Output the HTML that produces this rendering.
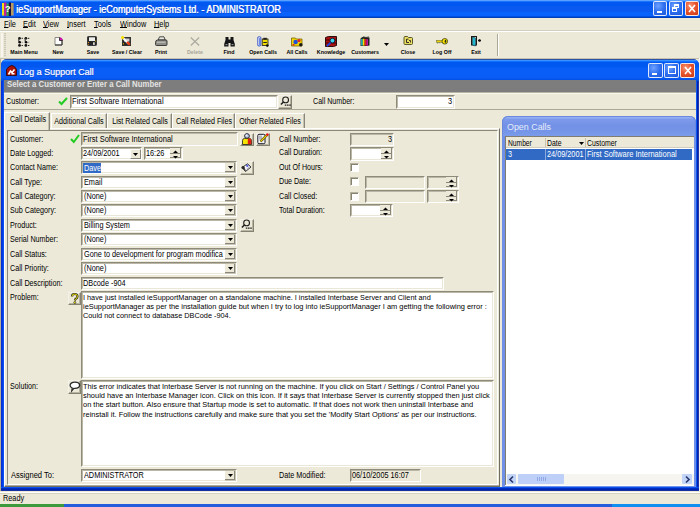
<!DOCTYPE html>
<html><head><meta charset="utf-8"><style>
html,body{margin:0;padding:0;}
body{width:700px;height:507px;overflow:hidden;position:relative;background:#ECE9D8;font-family:"Liberation Sans",sans-serif;}
.a{position:absolute;}
.t{position:absolute;white-space:nowrap;line-height:1;font-family:"Liberation Sans",sans-serif;}
svg.a{overflow:visible}
u{text-decoration-thickness:1px;text-underline-offset:0px}
</style></head><body>
<div class="a" style="left:0px;top:0px;width:700px;height:18px;background:linear-gradient(to bottom,#5AA0FF 0,#5AA0FF 1px,#1A74FF 1px,#1A74FF 2px,#0058F0 2px,#0058F0 6px,#0A5AF2 6px,#0A5AF2 12px,#0A62FC 12px,#0A62FC 16px,#0050E0 16px,#0050E0 17px,#0040C0 17px)"></div>
<svg class="a" style="left:2px;top:2px" width="12" height="14" viewBox="0 0 12 14"><rect x="0" y="1" width="2.2" height="12.5" fill="#f0e010"/><rect x="2.2" y="0.5" width="2.3" height="13.5" fill="#d01890"/><rect x="4.5" y="1.5" width="2.3" height="12.5" fill="#40a040"/><rect x="6.8" y="0.5" width="2.2" height="13.5" fill="#101040"/><rect x="9" y="1" width="2.6" height="12.5" fill="#b89a60"/><text x="3" y="9.5" font-size="9" font-weight="bold" fill="#fff" font-family="Liberation Sans">?</text></svg>
<div class="t" style="left:16px;top:4.54px;font-size:10px;color:#fff;transform:scaleX(0.9100);transform-origin:0 0;text-shadow:0.6px 0 0 rgba(255,255,255,.9),1px 1px 0 rgba(10,30,140,.4)">ieSupportManager - ieComputerSystems Ltd. - ADMINISTRATOR</div>
<div class="a" style="left:653px;top:1px;width:14px;height:15px;background:radial-gradient(circle at 35% 30%,#6FA2FF 0,#2F6FF0 50%,#1D55D8 100%);border:1px solid rgba(255,255,255,.85);border-radius:2px;box-sizing:border-box"></div>
<div class="a" style="left:657px;top:11px;width:5px;height:2px;background:#fff"></div>
<div class="a" style="left:669px;top:1px;width:14px;height:15px;background:radial-gradient(circle at 35% 30%,#6FA2FF 0,#2F6FF0 50%,#1D55D8 100%);border:1px solid rgba(255,255,255,.85);border-radius:2px;box-sizing:border-box"></div>
<div class="a" style="left:674px;top:4px;width:5px;height:4px;border:1px solid #fff;border-top-width:2px;box-sizing:border-box"></div>
<div class="a" style="left:672px;top:7px;width:5px;height:5px;border:1px solid #fff;border-top-width:2px;box-sizing:border-box;background:#3C74F0"></div>
<div class="a" style="left:685px;top:1px;width:14px;height:15px;background:radial-gradient(circle at 35% 30%,#F79A7A 0,#E8552F 45%,#C93A16 100%);border:1px solid rgba(255,255,255,.85);border-radius:2px;box-sizing:border-box"></div>
<svg class="a" style="left:688px;top:4px" width="8" height="9" viewBox="0 0 8 9"><path d="M1 1L7 8M7 1L1 8" stroke="#fff" stroke-width="1.6"/></svg>
<div class="a" style="left:0px;top:18px;width:700px;height:12px;background:#ECE9D8"></div>
<div class="t" style="left:4px;top:19.80px;font-size:8.5px;color:#000;transform:scaleX(0.8706);transform-origin:0 0;"><u>F</u>ile</div>
<div class="t" style="left:22.6px;top:19.80px;font-size:8.5px;color:#000;transform:scaleX(0.8706);transform-origin:0 0;"><u>E</u>dit</div>
<div class="t" style="left:43px;top:19.80px;font-size:8.5px;color:#000;transform:scaleX(0.8706);transform-origin:0 0;"><u>V</u>iew</div>
<div class="t" style="left:67px;top:19.80px;font-size:8.5px;color:#000;transform:scaleX(0.8706);transform-origin:0 0;"><u>I</u>nsert</div>
<div class="t" style="left:94px;top:19.80px;font-size:8.5px;color:#000;transform:scaleX(0.8706);transform-origin:0 0;"><u>T</u>ools</div>
<div class="t" style="left:119.5px;top:19.80px;font-size:8.5px;color:#000;transform:scaleX(0.8706);transform-origin:0 0;"><u>W</u>indow</div>
<div class="t" style="left:153.7px;top:19.80px;font-size:8.5px;color:#000;transform:scaleX(0.8706);transform-origin:0 0;"><u>H</u>elp</div>
<div class="a" style="left:0px;top:30px;width:700px;height:1px;background:#D3CFBF"></div>
<div class="a" style="left:0px;top:31px;width:700px;height:1px;background:#fff"></div>
<div class="a" style="left:0px;top:32px;width:700px;height:26px;background:#ECE9D8"></div>
<div class="a" style="left:1px;top:33px;width:2px;height:24px;background:#F7F5EE"></div>
<div class="a" style="left:4px;top:33px;width:2px;height:24px;background:repeating-linear-gradient(to bottom,#CDC9B6 0 1px,#E2DFD0 1px 2px)"></div>
<div class="a" style="left:497px;top:34px;width:1px;height:22px;background:#ACA899"></div>
<div class="a" style="left:498px;top:34px;width:1px;height:22px;background:#fff"></div>
<div class="t" style="left:-176px;width:400px;text-align:center;top:50.09px;font-size:5.8px;color:#000;font-weight:bold;transform:scaleX(0.9138);transform-origin:200px 0;">Main Menu</div>
<div class="t" style="left:-142px;width:400px;text-align:center;top:50.09px;font-size:5.8px;color:#000;font-weight:bold;transform:scaleX(0.9138);transform-origin:200px 0;">New</div>
<div class="t" style="left:-107px;width:400px;text-align:center;top:50.09px;font-size:5.8px;color:#000;font-weight:bold;transform:scaleX(0.9138);transform-origin:200px 0;">Save</div>
<div class="t" style="left:-73px;width:400px;text-align:center;top:50.09px;font-size:5.8px;color:#000;font-weight:bold;transform:scaleX(0.9138);transform-origin:200px 0;">Save / Clear</div>
<div class="t" style="left:-39px;width:400px;text-align:center;top:50.09px;font-size:5.8px;color:#000;font-weight:bold;transform:scaleX(0.9138);transform-origin:200px 0;">Print</div>
<div class="t" style="left:-5px;width:400px;text-align:center;top:50.09px;font-size:5.8px;color:#A8A59A;font-weight:bold;transform:scaleX(0.9138);transform-origin:200px 0;">Delete</div>
<div class="t" style="left:29px;width:400px;text-align:center;top:50.09px;font-size:5.8px;color:#000;font-weight:bold;transform:scaleX(0.9138);transform-origin:200px 0;">Find</div>
<div class="t" style="left:63px;width:400px;text-align:center;top:50.09px;font-size:5.8px;color:#000;font-weight:bold;transform:scaleX(0.9138);transform-origin:200px 0;">Open Calls</div>
<div class="t" style="left:97px;width:400px;text-align:center;top:50.09px;font-size:5.8px;color:#000;font-weight:bold;transform:scaleX(0.9138);transform-origin:200px 0;">All Calls</div>
<div class="t" style="left:131px;width:400px;text-align:center;top:50.09px;font-size:5.8px;color:#000;font-weight:bold;transform:scaleX(0.9138);transform-origin:200px 0;">Knowledge</div>
<div class="t" style="left:165px;width:400px;text-align:center;top:50.09px;font-size:5.8px;color:#000;font-weight:bold;transform:scaleX(0.9138);transform-origin:200px 0;">Customers</div>
<div class="t" style="left:208px;width:400px;text-align:center;top:50.09px;font-size:5.8px;color:#000;font-weight:bold;transform:scaleX(0.9138);transform-origin:200px 0;">Close</div>
<div class="t" style="left:242px;width:400px;text-align:center;top:50.09px;font-size:5.8px;color:#000;font-weight:bold;transform:scaleX(0.9138);transform-origin:200px 0;">Log Off</div>
<div class="t" style="left:276px;width:400px;text-align:center;top:50.09px;font-size:5.8px;color:#000;font-weight:bold;transform:scaleX(0.9138);transform-origin:200px 0;">Exit</div>
<svg class="a" style="left:383.5px;top:43.0px" width="5" height="3" viewBox="0 0 5 3"><path d="M0 0h5l-2.5 3z" fill="#000"/></svg>
<svg class="a" style="left:17px;top:36px" width="14" height="11" viewBox="0 0 14 11"><circle cx="2.5" cy="2.3" r="1.4" fill="#151515"/><rect x="1.2" y="2.3" width="1.2" height="3.5" fill="#444"/><circle cx="2.7" cy="6.2" r="1.3" fill="#050505"/><circle cx="2.5" cy="9.4" r="1.4" fill="#151515"/><rect x="4.6" y="1.8" width="1.3" height="1" fill="#222"/><rect x="4.6" y="5.8" width="1.3" height="1" fill="#999"/><rect x="4.6" y="9" width="1.3" height="1" fill="#222"/><circle cx="8.9" cy="2.3" r="1.4" fill="#151515"/><rect x="7.6000000000000005" y="2.3" width="1.2" height="3.5" fill="#444"/><circle cx="9.1" cy="6.2" r="1.3" fill="#050505"/><circle cx="8.9" cy="9.4" r="1.4" fill="#151515"/><rect x="11.0" y="1.8" width="1.3" height="1" fill="#222"/><rect x="11.0" y="5.8" width="1.3" height="1" fill="#999"/><rect x="11.0" y="9" width="1.3" height="1" fill="#222"/></svg>
<svg class="a" style="left:54px;top:37px" width="9" height="9" viewBox="0 0 9 9"><path d="M1 0.5h5l2 2v5.5h-7z" fill="#fff" stroke="#8C8A80" stroke-width="1"/><path d="M8 2.5v5.5h-7" stroke="#2A2A2A" stroke-width="1" fill="none"/><path d="M5.5 0.5h1.5l1.5 1.5v1.5h-3z" fill="#D010B0"/><path d="M5.5 0.5v3h3" stroke="#1A1A1A" stroke-width="0.8" fill="none"/></svg>
<svg class="a" style="left:87px;top:36px" width="10" height="10" viewBox="0 0 10 10"><rect x="0.5" y="0.5" width="9" height="9" rx="0.8" fill="#262626" stroke="#3A3A3A" stroke-width="1"/><rect x="2" y="1.3" width="6" height="3.7" fill="#F0F0EC"/><rect x="6" y="6.3" width="1.8" height="2.6" fill="#D8D8D0"/><rect x="1" y="6" width="1" height="1" fill="#E08A10"/><rect x="8.2" y="4.6" width="1" height="1" fill="#E0C010"/><rect x="1" y="8" width="1" height="1" fill="#A06010"/></svg>
<svg class="a" style="left:121px;top:36px" width="10" height="10" viewBox="0 0 10 10"><rect x="1.5" y="1.5" width="8" height="8" fill="#262626" stroke="#333" stroke-width="1"/><rect x="3" y="2.5" width="5.5" height="3" fill="#D0D0D0"/><path d="M1.5 1.5L8 8" stroke="#F4F4F4" stroke-width="2.2"/><path d="M6 6L8.8 8.8" stroke="#E83A10" stroke-width="2.2"/><circle cx="1.6" cy="1.6" r="1.6" fill="#F8E000"/><rect x="2" y="7" width="1" height="1.5" fill="#C09000"/></svg>
<svg class="a" style="left:155px;top:36px" width="12" height="10" viewBox="0 0 12 10"><path d="M4.5 0.8h4.5l1.2 3.2h-7z" fill="#E8E8E0" stroke="#3A3A3A" stroke-width="0.9"/><path d="M2.5 4h8.5q1 0 1 1v3.5q0 1-1 1h-9.5q-1 0-1-1v-2q0-2.5 2-2.5z" fill="#8E8E88" stroke="#2E2E2E" stroke-width="0.9"/><path d="M2 6.2h8.5" stroke="#D0D0C8" stroke-width="0.9"/></svg>
<svg class="a" style="left:190px;top:37px" width="10" height="9" viewBox="0 0 10 9"><path d="M0.8 0.5L9.2 8.5M9.2 0.5L0.8 8.5" stroke="#A9A89E" stroke-width="1.1"/></svg>
<svg class="a" style="left:224px;top:36px" width="11" height="11" viewBox="0 0 11 11"><path d="M1.5 1h3v2.5h2V1h3v3l1.3 4v2.5h-4.3V7h-2v3.5H0.2V8L1.5 4z" fill="#151515"/><rect x="1.5" y="8" width="2" height="1.2" fill="#888"/><rect x="7.5" y="8" width="2" height="1.2" fill="#888"/></svg>
<svg class="a" style="left:257px;top:36px" width="13" height="11" viewBox="0 0 13 11"><path d="M0.8 1.2Q2.2 0.2 3.8 1.2V9.5Q2.2 10.6 0.8 9.6Z" fill="#F4F6FF" stroke="#2848C0" stroke-width="0.9"/><path d="M2.6 2v7.3" stroke="#5070E0" stroke-width="0.9"/><rect x="5.2" y="3" width="5.8" height="6.5" fill="#F2DA00" stroke="#1A1A1A" stroke-width="0.8"/><rect x="6.3" y="1.8" width="3.5" height="2" fill="#202020"/><path d="M6.3 6.5h3.5" stroke="#202020" stroke-width="1"/><circle cx="10.3" cy="9.6" r="1.3" fill="#101010"/></svg>
<svg class="a" style="left:291px;top:36px" width="13" height="11" viewBox="0 0 13 11"><path d="M0.5 2h4l1 1h5.5v7h-10.5z" fill="#F2D800" stroke="#7A6400" stroke-width="0.8"/><circle cx="4.6" cy="6" r="2.3" fill="#2050D8"/><circle cx="8" cy="4.6" r="1.6" fill="#E02828"/><circle cx="9.8" cy="8.8" r="1.7" fill="#1A1A1A"/><rect x="1.5" y="8" width="2" height="1.5" fill="#E02828"/></svg>
<svg class="a" style="left:325px;top:36px" width="13" height="11" viewBox="0 0 13 11"><path d="M0.5 1.5l3-1h8v9l-3 1h-8z" fill="#A81010" stroke="#1A0000" stroke-width="0.9"/><path d="M1 4h10M1 7h10" stroke="#2A0000" stroke-width="0.8"/><circle cx="7.4" cy="4.6" r="2.4" fill="#38D0F0" stroke="#0A1A2A" stroke-width="0.9"/><path d="M5.6 6.6L1.8 10.2" stroke="#1848E8" stroke-width="1.6"/></svg>
<svg class="a" style="left:360px;top:36px" width="10" height="10" viewBox="0 0 10 10"><path d="M0.5 2.5L3 1L9.5 1.5V9.5L7 10H0.5Z" fill="#202020"/><rect x="1" y="3" width="1.8" height="6.5" fill="#18A8B8"/><rect x="2.8" y="2.8" width="1.8" height="6.8" fill="#F4E000"/><rect x="4.6" y="3" width="1.8" height="6.6" fill="#E02020"/><rect x="6.4" y="3.2" width="1.6" height="6.4" fill="#C018A0"/><path d="M1 2.5L3.5 0.8L6 1.5L9 0.8" stroke="#333" stroke-width="0.8" fill="none"/></svg>
<svg class="a" style="left:403px;top:36px" width="10" height="9" viewBox="0 0 10 9"><path d="M1 1.5Q1 0.5 2 0.5H4.5L5.5 1.5H8.5Q9.5 1.5 9.5 2.5V7.5Q9.5 8.5 8.5 8.5H2Q1 8.5 1 7.5Z" fill="#EADC60" stroke="#4A4A20" stroke-width="0.9"/><path d="M5.5 3.2H3.5V6.5H6" stroke="#1A1A1A" stroke-width="0.9" fill="none"/><path d="M6 4.5h1.5v2" stroke="#1A1A1A" stroke-width="0.8" fill="none"/></svg>
<svg class="a" style="left:436px;top:38px" width="12" height="7" viewBox="0 0 12 7"><rect x="0.5" y="2.3" width="6" height="2" fill="#E8D000" stroke="#6A6A30" stroke-width="0.5"/><rect x="1" y="4" width="1.2" height="1.5" fill="#8A8A50"/><rect x="3" y="4" width="1.2" height="1.2" fill="#8A8A50"/><ellipse cx="8.8" cy="3.3" rx="2.8" ry="2.8" fill="#F4E000" stroke="#3A3A10" stroke-width="0.8"/><ellipse cx="9.5" cy="3.3" rx="0.8" ry="1.5" fill="#2A2A10"/></svg>
<svg class="a" style="left:471px;top:36px" width="11" height="10" viewBox="0 0 11 10"><rect x="0.5" y="0.5" width="5" height="8.5" fill="none" stroke="#1A1A1A" stroke-width="1"/><path d="M1.5 1l3 1v8l-3-1z" fill="#20B8D0" stroke="#0A3040" stroke-width="0.6"/><path d="M7 4.5h3M8.8 3v3" stroke="#111" stroke-width="1.1"/><path d="M7.5 3.3l1.5 1.2-1.5 1.2" fill="#111"/></svg>
<div class="a" style="left:0px;top:59px;width:1px;height:432px;background:#B5AF95"></div>
<div class="a" style="left:0px;top:58px;width:700px;height:1px;background:#C6C2AE"></div>
<div class="a" style="left:1px;top:59px;width:698px;height:432px;background:#0831D9;border-radius:6px 6px 0 0"></div>
<div class="a" style="left:1px;top:59px;width:698px;height:22px;border-radius:6px 6px 0 0;background:linear-gradient(to bottom,#2C52A8 0,#2C52A8 1px,#3A90FF 1px,#3A90FF 2px,#1070FF 2px,#1070FF 3px,#0058F0 3px,#0058F0 8px,#0A5EF8 9px,#0A5EF8 18px,#0A5AF4 19px,#0050E4 21px)"></div>
<div class="a" style="left:699px;top:58px;width:1px;height:433px;background:#F4F2EA"></div>
<div class="a" style="left:1px;top:81px;width:3px;height:406px;background:linear-gradient(to right,#0A2ACB,#0036E0 1px,#0044EC 2px,#1A5CF4 3px)"></div>
<div class="a" style="left:696px;top:81px;width:3px;height:406px;background:linear-gradient(to right,#0A56F0 0,#0A56F0 1px,#0020B0 1px,#0020B0 2px,#2038A8 2px)"></div>
<div class="a" style="left:1px;top:487px;width:698px;height:4px;background:linear-gradient(to bottom,#0A50EC 0,#0A50EC 1px,#0030C8 1px,#0020A8 3px,#2A40A0 4px)"></div>
<svg class="a" style="left:6px;top:65px" width="11" height="11" viewBox="0 0 11 11"><path d="M0.5 4.5Q3 0.5 6 0.5Q9 1 10.5 4.5V10.5H0.5Z" fill="#A81208" stroke="#2A0000" stroke-width="0.8"/><path d="M2.5 9.5L4.5 6L6 7.5L8.5 4.5" stroke="#fff" stroke-width="1.6" fill="none"/><rect x="5.5" y="8" width="3" height="1.5" fill="#fff"/></svg>
<div class="t" style="left:19px;top:66.70px;font-size:9.8px;color:#fff;transform:scaleX(0.9184);transform-origin:0 0;text-shadow:0.6px 0 0 rgba(255,255,255,.55),1px 1px 0 rgba(20,50,160,.5)">Log a Support Call</div>
<div class="a" style="left:648px;top:63px;width:15px;height:15px;background:radial-gradient(circle at 35% 30%,#6FA2FF 0,#2F6FF0 50%,#1D55D8 100%);border:1px solid rgba(255,255,255,.85);border-radius:2px;box-sizing:border-box"></div>
<div class="a" style="left:652px;top:73px;width:5px;height:2px;background:#fff"></div>
<div class="a" style="left:664px;top:63px;width:15px;height:15px;background:radial-gradient(circle at 35% 30%,#6FA2FF 0,#2F6FF0 50%,#1D55D8 100%);border:1px solid rgba(255,255,255,.85);border-radius:2px;box-sizing:border-box"></div>
<div class="a" style="left:668px;top:66px;width:8px;height:8px;border:1px solid #fff;border-top-width:2px;box-sizing:border-box"></div>
<div class="a" style="left:680px;top:63px;width:15px;height:15px;background:radial-gradient(circle at 35% 30%,#F79A7A 0,#E8552F 45%,#C93A16 100%);border:1px solid rgba(255,255,255,.85);border-radius:2px;box-sizing:border-box"></div>
<svg class="a" style="left:684px;top:66px" width="8" height="9" viewBox="0 0 8 9"><path d="M1 1L7 8M7 1L1 8" stroke="#fff" stroke-width="1.6"/></svg>
<div class="a" style="left:4px;top:80px;width:692px;height:407px;background:#ECE9D8"></div>
<div class="a" style="left:4px;top:80px;width:692px;height:12px;background:#7C7D7C"></div>
<div class="t" style="left:7px;top:81.06px;font-size:8.2px;color:#E4E4E4;font-weight:bold;transform:scaleX(0.9512);transform-origin:0 0;">Select a Customer or Enter a Call Number</div>
<div class="a" style="left:4px;top:92px;width:692px;height:1px;background:#B8B4A0"></div>
<div class="a" style="left:4px;top:93px;width:692px;height:1px;background:#F8F7F0"></div>
<div class="t" style="left:6.4px;top:96.80px;font-size:8.5px;color:#000;transform:scaleX(0.8412);transform-origin:0 0;">Customer:</div>
<svg class="a" style="left:58px;top:97px" width="10" height="8" viewBox="0 0 10 8"><path d="M1 4.5L3.5 7L9 1" stroke="#22CC22" stroke-width="2" fill="none"/></svg>
<div class="a" style="left:70px;top:95px;width:208px;height:14px;background:#fff;border-top:1px solid #8E8B7A;border-left:1px solid #8E8B7A;border-bottom:1px solid #fff;border-right:1px solid #fff;box-sizing:border-box"></div>
<div class="a" style="left:71px;top:96px;width:206px;height:12px;border-top:1px solid #BAB7A6;border-left:1px solid #BAB7A6;border-bottom:1px solid #EAE7D8;border-right:1px solid #EAE7D8;box-sizing:border-box"></div>
<div class="t" style="left:72px;top:96.80px;font-size:8.5px;color:#000;transform:scaleX(0.9017);transform-origin:0 0;">First Software International</div>
<div class="a" style="left:278px;top:95px;width:14px;height:14px;background:#ECE9D8;border-top:1px solid #F4F2E8;border-left:1px solid #F4F2E8;border-bottom:1px solid #858272;border-right:1px solid #858272;box-sizing:border-box"></div>
<div class="a" style="left:279px;top:96px;width:12px;height:12px;border-bottom:1px solid #B8B5A4;border-right:1px solid #B8B5A4;box-sizing:border-box"></div>
<svg class="a" style="left:280px;top:96px" width="11" height="11" viewBox="0 0 11 11"><circle cx="5.6" cy="3.9" r="2.9" fill="none" stroke="#1E1E1E" stroke-width="1.1"/><path d="M3.4 6L0.9 8.6" stroke="#1E1E1E" stroke-width="1.5"/><path d="M4.8 9.2h6" stroke="#1E1E1E" stroke-width="1.2" stroke-dasharray="1.6 0.6"/></svg>
<div class="t" style="left:312.5px;top:96.80px;font-size:8.5px;color:#000;transform:scaleX(0.8353);transform-origin:0 0;">Call Number:</div>
<div class="a" style="left:396px;top:95px;width:59px;height:14px;background:#fff;border-top:1px solid #8E8B7A;border-left:1px solid #8E8B7A;border-bottom:1px solid #fff;border-right:1px solid #fff;box-sizing:border-box"></div>
<div class="a" style="left:397px;top:96px;width:57px;height:12px;border-top:1px solid #BAB7A6;border-left:1px solid #BAB7A6;border-bottom:1px solid #EAE7D8;border-right:1px solid #EAE7D8;box-sizing:border-box"></div>
<div class="t" style="left:52px;width:400px;text-align:right;top:96.80px;font-size:8.5px;color:#000;transform:scaleX(0.8706);transform-origin:400px 0;">3</div>
<div class="a" style="left:4px;top:109px;width:692px;height:1px;background:#ACA899"></div>
<div class="a" style="left:51px;top:113px;width:56px;height:16px;border-left:1px solid #fff;border-top:1px solid #fff;border-right:1px solid #8A877A;box-sizing:border-box"></div>
<div class="a" style="left:105px;top:114px;width:1px;height:15px;background:#C5C2B2"></div>
<div class="t" style="left:-121.0px;width:400px;text-align:center;top:116.80px;font-size:8.5px;color:#000;transform:scaleX(0.8412);transform-origin:200px 0;">Additional Calls</div>
<div class="a" style="left:107px;top:113px;width:65px;height:16px;border-left:1px solid #fff;border-top:1px solid #fff;border-right:1px solid #8A877A;box-sizing:border-box"></div>
<div class="a" style="left:170px;top:114px;width:1px;height:15px;background:#C5C2B2"></div>
<div class="t" style="left:-60.5px;width:400px;text-align:center;top:116.80px;font-size:8.5px;color:#000;transform:scaleX(0.8412);transform-origin:200px 0;">List Related Calls</div>
<div class="a" style="left:172px;top:113px;width:63px;height:16px;border-left:1px solid #fff;border-top:1px solid #fff;border-right:1px solid #8A877A;box-sizing:border-box"></div>
<div class="a" style="left:233px;top:114px;width:1px;height:15px;background:#C5C2B2"></div>
<div class="t" style="left:3.5px;width:400px;text-align:center;top:116.80px;font-size:8.5px;color:#000;transform:scaleX(0.8412);transform-origin:200px 0;">Call Related Files</div>
<div class="a" style="left:235px;top:113px;width:70px;height:16px;border-left:1px solid #fff;border-top:1px solid #fff;border-right:1px solid #8A877A;box-sizing:border-box"></div>
<div class="a" style="left:303px;top:114px;width:1px;height:15px;background:#C5C2B2"></div>
<div class="t" style="left:70.0px;width:400px;text-align:center;top:116.80px;font-size:8.5px;color:#000;transform:scaleX(0.8412);transform-origin:200px 0;">Other Related Files</div>
<div class="a" style="left:4px;top:128px;width:496px;height:359px;border-left:1px solid #fff;border-top:1px solid #fff;border-right:1px solid #716F64;border-bottom:1px solid #716F64;box-sizing:border-box"></div>
<div class="a" style="left:5px;top:129px;width:494px;height:357px;border-bottom:1px solid #ACA899;box-sizing:border-box"></div>
<div class="a" style="left:4px;top:112px;width:46px;height:18px;background:#ECE9D8;border-left:1px solid #fff;border-top:1px solid #fff;border-right:1px solid #8A877A;box-sizing:border-box"></div>
<div class="a" style="left:48px;top:113px;width:1px;height:17px;background:#C5C2B2"></div>
<div class="t" style="left:-172.5px;width:400px;text-align:center;top:114.80px;font-size:8.5px;color:#000;transform:scaleX(0.8412);transform-origin:200px 0;">Call Details</div>
<div class="a" style="left:7px;top:130px;width:491px;height:355px;border-left:1px solid #8A877A;border-top:1px solid #8A877A;border-right:1px solid #fff;border-bottom:1px solid #fff;box-sizing:border-box"></div>
<div class="t" style="left:10px;top:134.80px;font-size:8.5px;color:#000;transform:scaleX(0.8471);transform-origin:0 0;">Customer:</div>
<div class="t" style="left:10px;top:148.80px;font-size:8.5px;color:#000;transform:scaleX(0.8471);transform-origin:0 0;">Date Logged:</div>
<div class="t" style="left:10px;top:162.80px;font-size:8.5px;color:#000;transform:scaleX(0.8471);transform-origin:0 0;">Contact Name:</div>
<div class="t" style="left:10px;top:177.80px;font-size:8.5px;color:#000;transform:scaleX(0.8471);transform-origin:0 0;">Call Type:</div>
<div class="t" style="left:10px;top:191.80px;font-size:8.5px;color:#000;transform:scaleX(0.8471);transform-origin:0 0;">Call Category:</div>
<div class="t" style="left:10px;top:205.80px;font-size:8.5px;color:#000;transform:scaleX(0.8471);transform-origin:0 0;">Sub Category:</div>
<div class="t" style="left:10px;top:220.80px;font-size:8.5px;color:#000;transform:scaleX(0.8471);transform-origin:0 0;">Product:</div>
<div class="t" style="left:10px;top:234.80px;font-size:8.5px;color:#000;transform:scaleX(0.8471);transform-origin:0 0;">Serial Number:</div>
<div class="t" style="left:10px;top:249.80px;font-size:8.5px;color:#000;transform:scaleX(0.8471);transform-origin:0 0;">Call Status:</div>
<div class="t" style="left:10px;top:263.80px;font-size:8.5px;color:#000;transform:scaleX(0.8471);transform-origin:0 0;">Call Priority:</div>
<div class="t" style="left:10px;top:278.80px;font-size:8.5px;color:#000;transform:scaleX(0.8471);transform-origin:0 0;">Call Description:</div>
<div class="t" style="left:10px;top:292.80px;font-size:8.5px;color:#000;transform:scaleX(0.8471);transform-origin:0 0;">Problem:</div>
<div class="t" style="left:10px;top:381.80px;font-size:8.5px;color:#000;transform:scaleX(0.8471);transform-origin:0 0;">Solution:</div>
<div class="t" style="left:11px;top:470.80px;font-size:8.5px;color:#000;transform:scaleX(0.8882);transform-origin:0 0;">Assigned To:</div>
<svg class="a" style="left:70px;top:134px" width="10" height="9" viewBox="0 0 10 9"><path d="M1 5L3.8 8L9 1" stroke="#22CC22" stroke-width="2" fill="none"/></svg>
<div class="a" style="left:81px;top:132px;width:157px;height:14px;background:#ECE9D8;border-top:1px solid #8E8B7A;border-left:1px solid #8E8B7A;border-bottom:1px solid #fff;border-right:1px solid #fff;box-sizing:border-box"></div>
<div class="a" style="left:82px;top:133px;width:155px;height:12px;border-top:1px solid #BAB7A6;border-left:1px solid #BAB7A6;border-bottom:1px solid #EAE7D8;border-right:1px solid #EAE7D8;box-sizing:border-box"></div>
<div class="t" style="left:83px;top:134.80px;font-size:8.5px;color:#000;transform:scaleX(0.8835);transform-origin:0 0;">First Software International</div>
<div class="a" style="left:240px;top:133px;width:14px;height:13px;background:#ECE9D8;border-top:1px solid #F4F2E8;border-left:1px solid #F4F2E8;border-bottom:1px solid #858272;border-right:1px solid #858272;box-sizing:border-box"></div>
<div class="a" style="left:241px;top:134px;width:12px;height:11px;border-bottom:1px solid #B8B5A4;border-right:1px solid #B8B5A4;box-sizing:border-box"></div>
<svg class="a" style="left:242px;top:133px" width="10" height="12" viewBox="0 0 10 12"><circle cx="5" cy="3" r="2.4" fill="#B8C4E0" stroke="#1A1A2A" stroke-width="0.9"/><circle cx="4.4" cy="2.4" r="0.9" fill="#F0F4FF"/><path d="M0.5 11.5V7.5Q0.5 5.6 2.5 5.4H7.5Q9.5 5.6 9.5 7.5V11.5Z" fill="#F4E400" stroke="#1A1A1A" stroke-width="0.8"/><path d="M5.8 5.6h2.2q1.3 0.4 1.3 2v3.7h-3.5z" fill="#E02010"/></svg>
<div class="a" style="left:256px;top:133px;width:14px;height:13px;background:#ECE9D8;border-top:1px solid #F4F2E8;border-left:1px solid #F4F2E8;border-bottom:1px solid #858272;border-right:1px solid #858272;box-sizing:border-box"></div>
<div class="a" style="left:257px;top:134px;width:12px;height:11px;border-bottom:1px solid #B8B5A4;border-right:1px solid #B8B5A4;box-sizing:border-box"></div>
<svg class="a" style="left:257px;top:133px" width="12" height="12" viewBox="0 0 12 12"><rect x="0.8" y="1.3" width="7.2" height="9.4" rx="1.2" fill="#F4F4F4" stroke="#1A1A2A" stroke-width="1"/><rect x="2" y="2.5" width="3" height="4" fill="#B8B8C0"/><path d="M3.5 8.5L10 2" stroke="#1A1A1A" stroke-width="2.4"/><path d="M3.5 8.5L10 2" stroke="#F0D000" stroke-width="1.4"/><circle cx="10.4" cy="1.6" r="1.3" fill="#E81010"/></svg>
<div class="a" style="left:81px;top:147px;width:61px;height:13px;background:#fff;border-top:1px solid #8E8B7A;border-left:1px solid #8E8B7A;border-bottom:1px solid #fff;border-right:1px solid #fff;box-sizing:border-box"></div>
<div class="a" style="left:82px;top:148px;width:59px;height:11px;border-top:1px solid #BAB7A6;border-left:1px solid #BAB7A6;border-bottom:1px solid #EAE7D8;border-right:1px solid #EAE7D8;box-sizing:border-box"></div>
<div class="t" style="left:83px;top:148.80px;font-size:8.5px;color:#000;transform:scaleX(0.8588);transform-origin:0 0;">24/09/2001</div>
<div class="a" style="left:130px;top:149px;width:11px;height:10px;background:#ECE9D8;border:1px solid #fff;border-right-color:#8A877A;border-bottom-color:#8A877A;box-sizing:border-box"></div>
<svg class="a" style="left:133.0px;top:152.5px" width="5" height="3" viewBox="0 0 5 3"><path d="M0 0h5l-2.5 3z" fill="#000"/></svg>
<div class="a" style="left:144px;top:147px;width:39px;height:13px;background:#fff;border-top:1px solid #8E8B7A;border-left:1px solid #8E8B7A;border-bottom:1px solid #fff;border-right:1px solid #fff;box-sizing:border-box"></div>
<div class="a" style="left:145px;top:148px;width:37px;height:11px;border-top:1px solid #BAB7A6;border-left:1px solid #BAB7A6;border-bottom:1px solid #EAE7D8;border-right:1px solid #EAE7D8;box-sizing:border-box"></div>
<div class="t" style="left:146px;top:148.80px;font-size:8.5px;color:#000;transform:scaleX(0.8588);transform-origin:0 0;">16:26</div>
<div class="a" style="left:170px;top:148px;width:11px;height:6px;background:#ECE9D8;border-right:1px solid #8A877A;border-bottom:1px solid #8A877A;box-sizing:border-box"></div>
<div class="a" style="left:170px;top:154px;width:11px;height:4px;background:#ECE9D8;border-right:1px solid #8A877A;border-bottom:1px solid #8A877A;box-sizing:border-box"></div>
<svg class="a" style="left:173px;top:150px" width="5" height="3" viewBox="0 0 5 3"><path d="M0 3h5l-2.5-2.5z" fill="#000"/></svg>
<svg class="a" style="left:173px;top:155.5px" width="5" height="3" viewBox="0 0 5 3"><path d="M0 0h5l-2.5 2.5z" fill="#000"/></svg>
<div class="a" style="left:81px;top:161px;width:156px;height:13px;background:#fff;border-top:1px solid #8E8B7A;border-left:1px solid #8E8B7A;border-bottom:1px solid #fff;border-right:1px solid #fff;box-sizing:border-box"></div>
<div class="a" style="left:82px;top:162px;width:154px;height:11px;border-top:1px solid #BAB7A6;border-left:1px solid #BAB7A6;border-bottom:1px solid #EAE7D8;border-right:1px solid #EAE7D8;box-sizing:border-box"></div>
<div class="a" style="left:225px;top:163px;width:11px;height:10px;background:#ECE9D8;border-right:1px solid #C9C6B6;border-bottom:1px solid #C9C6B6;box-sizing:border-box"></div>
<div class="a" style="left:225px;top:163px;width:10px;height:9px;border-right:1px solid #8A877A;border-bottom:1px solid #8A877A;box-sizing:border-box"></div>
<svg class="a" style="left:227.5px;top:166.0px" width="5" height="3" viewBox="0 0 5 3"><path d="M0 0h5l-2.5 3z" fill="#000"/></svg>
<div class="a" style="left:83px;top:163px;width:18px;height:10px;background:#316AC5"></div>
<div class="t" style="left:84px;top:163.80px;font-size:8.5px;color:#fff;transform:scaleX(0.8588);transform-origin:0 0;">Dave</div>
<div class="a" style="left:81px;top:176px;width:156px;height:13px;background:#fff;border-top:1px solid #8E8B7A;border-left:1px solid #8E8B7A;border-bottom:1px solid #fff;border-right:1px solid #fff;box-sizing:border-box"></div>
<div class="a" style="left:82px;top:177px;width:154px;height:11px;border-top:1px solid #BAB7A6;border-left:1px solid #BAB7A6;border-bottom:1px solid #EAE7D8;border-right:1px solid #EAE7D8;box-sizing:border-box"></div>
<div class="a" style="left:225px;top:178px;width:11px;height:10px;background:#ECE9D8;border-right:1px solid #C9C6B6;border-bottom:1px solid #C9C6B6;box-sizing:border-box"></div>
<div class="a" style="left:225px;top:178px;width:10px;height:9px;border-right:1px solid #8A877A;border-bottom:1px solid #8A877A;box-sizing:border-box"></div>
<svg class="a" style="left:227.5px;top:181.0px" width="5" height="3" viewBox="0 0 5 3"><path d="M0 0h5l-2.5 3z" fill="#000"/></svg>
<div class="t" style="left:84px;top:177.80px;font-size:8.5px;color:#000;transform:scaleX(0.8588);transform-origin:0 0;">Email</div>
<div class="a" style="left:81px;top:190px;width:156px;height:13px;background:#fff;border-top:1px solid #8E8B7A;border-left:1px solid #8E8B7A;border-bottom:1px solid #fff;border-right:1px solid #fff;box-sizing:border-box"></div>
<div class="a" style="left:82px;top:191px;width:154px;height:11px;border-top:1px solid #BAB7A6;border-left:1px solid #BAB7A6;border-bottom:1px solid #EAE7D8;border-right:1px solid #EAE7D8;box-sizing:border-box"></div>
<div class="a" style="left:225px;top:192px;width:11px;height:10px;background:#ECE9D8;border-right:1px solid #C9C6B6;border-bottom:1px solid #C9C6B6;box-sizing:border-box"></div>
<div class="a" style="left:225px;top:192px;width:10px;height:9px;border-right:1px solid #8A877A;border-bottom:1px solid #8A877A;box-sizing:border-box"></div>
<svg class="a" style="left:227.5px;top:195.0px" width="5" height="3" viewBox="0 0 5 3"><path d="M0 0h5l-2.5 3z" fill="#000"/></svg>
<div class="t" style="left:84px;top:191.80px;font-size:8.5px;color:#000;transform:scaleX(0.8588);transform-origin:0 0;">(None)</div>
<div class="a" style="left:81px;top:204px;width:156px;height:13px;background:#fff;border-top:1px solid #8E8B7A;border-left:1px solid #8E8B7A;border-bottom:1px solid #fff;border-right:1px solid #fff;box-sizing:border-box"></div>
<div class="a" style="left:82px;top:205px;width:154px;height:11px;border-top:1px solid #BAB7A6;border-left:1px solid #BAB7A6;border-bottom:1px solid #EAE7D8;border-right:1px solid #EAE7D8;box-sizing:border-box"></div>
<div class="a" style="left:225px;top:206px;width:11px;height:10px;background:#ECE9D8;border-right:1px solid #C9C6B6;border-bottom:1px solid #C9C6B6;box-sizing:border-box"></div>
<div class="a" style="left:225px;top:206px;width:10px;height:9px;border-right:1px solid #8A877A;border-bottom:1px solid #8A877A;box-sizing:border-box"></div>
<svg class="a" style="left:227.5px;top:209.0px" width="5" height="3" viewBox="0 0 5 3"><path d="M0 0h5l-2.5 3z" fill="#000"/></svg>
<div class="t" style="left:84px;top:205.80px;font-size:8.5px;color:#000;transform:scaleX(0.8588);transform-origin:0 0;">(None)</div>
<div class="a" style="left:81px;top:219px;width:156px;height:13px;background:#fff;border-top:1px solid #8E8B7A;border-left:1px solid #8E8B7A;border-bottom:1px solid #fff;border-right:1px solid #fff;box-sizing:border-box"></div>
<div class="a" style="left:82px;top:220px;width:154px;height:11px;border-top:1px solid #BAB7A6;border-left:1px solid #BAB7A6;border-bottom:1px solid #EAE7D8;border-right:1px solid #EAE7D8;box-sizing:border-box"></div>
<div class="a" style="left:225px;top:221px;width:11px;height:10px;background:#ECE9D8;border-right:1px solid #C9C6B6;border-bottom:1px solid #C9C6B6;box-sizing:border-box"></div>
<div class="a" style="left:225px;top:221px;width:10px;height:9px;border-right:1px solid #8A877A;border-bottom:1px solid #8A877A;box-sizing:border-box"></div>
<svg class="a" style="left:227.5px;top:224.0px" width="5" height="3" viewBox="0 0 5 3"><path d="M0 0h5l-2.5 3z" fill="#000"/></svg>
<div class="t" style="left:84px;top:220.80px;font-size:8.5px;color:#000;transform:scaleX(0.8588);transform-origin:0 0;">Billing System</div>
<div class="a" style="left:81px;top:233px;width:156px;height:13px;background:#fff;border-top:1px solid #8E8B7A;border-left:1px solid #8E8B7A;border-bottom:1px solid #fff;border-right:1px solid #fff;box-sizing:border-box"></div>
<div class="a" style="left:82px;top:234px;width:154px;height:11px;border-top:1px solid #BAB7A6;border-left:1px solid #BAB7A6;border-bottom:1px solid #EAE7D8;border-right:1px solid #EAE7D8;box-sizing:border-box"></div>
<div class="a" style="left:225px;top:235px;width:11px;height:10px;background:#ECE9D8;border-right:1px solid #C9C6B6;border-bottom:1px solid #C9C6B6;box-sizing:border-box"></div>
<div class="a" style="left:225px;top:235px;width:10px;height:9px;border-right:1px solid #8A877A;border-bottom:1px solid #8A877A;box-sizing:border-box"></div>
<svg class="a" style="left:227.5px;top:238.0px" width="5" height="3" viewBox="0 0 5 3"><path d="M0 0h5l-2.5 3z" fill="#000"/></svg>
<div class="t" style="left:84px;top:234.80px;font-size:8.5px;color:#000;transform:scaleX(0.8588);transform-origin:0 0;">(None)</div>
<div class="a" style="left:81px;top:248px;width:156px;height:13px;background:#fff;border-top:1px solid #8E8B7A;border-left:1px solid #8E8B7A;border-bottom:1px solid #fff;border-right:1px solid #fff;box-sizing:border-box"></div>
<div class="a" style="left:82px;top:249px;width:154px;height:11px;border-top:1px solid #BAB7A6;border-left:1px solid #BAB7A6;border-bottom:1px solid #EAE7D8;border-right:1px solid #EAE7D8;box-sizing:border-box"></div>
<div class="a" style="left:225px;top:250px;width:11px;height:10px;background:#ECE9D8;border-right:1px solid #C9C6B6;border-bottom:1px solid #C9C6B6;box-sizing:border-box"></div>
<div class="a" style="left:225px;top:250px;width:10px;height:9px;border-right:1px solid #8A877A;border-bottom:1px solid #8A877A;box-sizing:border-box"></div>
<svg class="a" style="left:227.5px;top:253.0px" width="5" height="3" viewBox="0 0 5 3"><path d="M0 0h5l-2.5 3z" fill="#000"/></svg>
<div class="t" style="left:84px;top:249.80px;font-size:8.5px;color:#000;transform:scaleX(0.8588);transform-origin:0 0;">Gone to development for program modifica</div>
<div class="a" style="left:81px;top:262px;width:156px;height:13px;background:#fff;border-top:1px solid #8E8B7A;border-left:1px solid #8E8B7A;border-bottom:1px solid #fff;border-right:1px solid #fff;box-sizing:border-box"></div>
<div class="a" style="left:82px;top:263px;width:154px;height:11px;border-top:1px solid #BAB7A6;border-left:1px solid #BAB7A6;border-bottom:1px solid #EAE7D8;border-right:1px solid #EAE7D8;box-sizing:border-box"></div>
<div class="a" style="left:225px;top:264px;width:11px;height:10px;background:#ECE9D8;border-right:1px solid #C9C6B6;border-bottom:1px solid #C9C6B6;box-sizing:border-box"></div>
<div class="a" style="left:225px;top:264px;width:10px;height:9px;border-right:1px solid #8A877A;border-bottom:1px solid #8A877A;box-sizing:border-box"></div>
<svg class="a" style="left:227.5px;top:267.0px" width="5" height="3" viewBox="0 0 5 3"><path d="M0 0h5l-2.5 3z" fill="#000"/></svg>
<div class="t" style="left:84px;top:263.80px;font-size:8.5px;color:#000;transform:scaleX(0.8588);transform-origin:0 0;">(None)</div>
<div class="a" style="left:240px;top:161px;width:14px;height:14px;background:#ECE9D8;border-top:1px solid #F4F2E8;border-left:1px solid #F4F2E8;border-bottom:1px solid #858272;border-right:1px solid #858272;box-sizing:border-box"></div>
<div class="a" style="left:241px;top:162px;width:12px;height:12px;border-bottom:1px solid #B8B5A4;border-right:1px solid #B8B5A4;box-sizing:border-box"></div>
<svg class="a" style="left:241px;top:162px" width="11" height="11" viewBox="0 0 11 11"><path d="M1 5.5L6.5 1.8L10 5L4.5 9.5Z" fill="#F4F4FA" stroke="#222" stroke-width="0.9"/><path d="M1 5.5L3 4.2L4.8 8.8L4.5 9.5Z" fill="#3A3A3A"/><circle cx="2" cy="5.5" r="1.5" fill="#2A2A2A"/><circle cx="6.3" cy="3.8" r="1.2" fill="#5A60E0"/><path d="M5.5 7L8.5 5" stroke="#A0A0C0" stroke-width="0.8"/></svg>
<div class="a" style="left:240px;top:219px;width:14px;height:13px;background:#ECE9D8;border-top:1px solid #F4F2E8;border-left:1px solid #F4F2E8;border-bottom:1px solid #858272;border-right:1px solid #858272;box-sizing:border-box"></div>
<div class="a" style="left:241px;top:220px;width:12px;height:11px;border-bottom:1px solid #B8B5A4;border-right:1px solid #B8B5A4;box-sizing:border-box"></div>
<svg class="a" style="left:241px;top:219px" width="11" height="11" viewBox="0 0 11 11"><circle cx="5.6" cy="3.9" r="2.9" fill="none" stroke="#1E1E1E" stroke-width="1.1"/><path d="M3.4 6L0.9 8.6" stroke="#1E1E1E" stroke-width="1.5"/><path d="M4.8 9.2h6" stroke="#1E1E1E" stroke-width="1.2" stroke-dasharray="1.6 0.6"/></svg>
<div class="a" style="left:81px;top:277px;width:363px;height:13px;background:#fff;border-top:1px solid #8E8B7A;border-left:1px solid #8E8B7A;border-bottom:1px solid #fff;border-right:1px solid #fff;box-sizing:border-box"></div>
<div class="a" style="left:82px;top:278px;width:361px;height:11px;border-top:1px solid #BAB7A6;border-left:1px solid #BAB7A6;border-bottom:1px solid #EAE7D8;border-right:1px solid #EAE7D8;box-sizing:border-box"></div>
<div class="t" style="left:83px;top:278.80px;font-size:8.5px;color:#000;transform:scaleX(0.8588);transform-origin:0 0;">DBcode -904</div>
<div class="a" style="left:81px;top:291px;width:413px;height:88px;background:#fff;border-top:1px solid #8E8B7A;border-left:1px solid #8E8B7A;border-bottom:1px solid #fff;border-right:1px solid #fff;box-sizing:border-box"></div>
<div class="a" style="left:82px;top:292px;width:411px;height:86px;border-top:1px solid #BAB7A6;border-left:1px solid #BAB7A6;border-bottom:1px solid #EAE7D8;border-right:1px solid #EAE7D8;box-sizing:border-box"></div>
<div class="t" style="left:83px;top:293.57px;font-size:7.6px;color:#000;transform:scaleX(0.9611);transform-origin:0 0;">I have just installed ieSupportManager on a standalone machine. I installed Interbase Server and Client and</div>
<div class="t" style="left:83px;top:303.02px;font-size:7.6px;color:#000;transform:scaleX(0.9781);transform-origin:0 0;">ieSupportManager as per the installation guide but when I try to log into ieSupportManager I am getting the following error :</div>
<div class="t" style="left:83px;top:312.47px;font-size:7.6px;color:#000;transform:scaleX(0.9638);transform-origin:0 0;">Could not connect to database DBCode -904.</div>
<div class="a" style="left:68px;top:292px;width:13px;height:13px;background:#ECE9D8;border-top:1px solid #F4F2E8;border-left:1px solid #F4F2E8;border-bottom:1px solid #858272;border-right:1px solid #858272;box-sizing:border-box"></div>
<div class="a" style="left:69px;top:293px;width:11px;height:11px;border-bottom:1px solid #B8B5A4;border-right:1px solid #B8B5A4;box-sizing:border-box"></div>
<svg class="a" style="left:70px;top:293px" width="9" height="11" viewBox="0 0 9 11"><path d="M2 3.5Q2 1 4.5 1Q7.5 1 7.5 3.5Q7.5 5 5.5 6L4.8 7.5" stroke="#222" stroke-width="2.2" fill="none"/><path d="M2 3.5Q2 1 4.5 1Q7.5 1 7.5 3.5Q7.5 5 5.5 6L4.8 7.5" stroke="#F5E800" stroke-width="1" fill="none"/><circle cx="4.8" cy="9.5" r="1.1" fill="#F5E800" stroke="#222" stroke-width="0.6"/></svg>
<div class="a" style="left:81px;top:380px;width:413px;height:87px;background:#fff;border-top:1px solid #8E8B7A;border-left:1px solid #8E8B7A;border-bottom:1px solid #fff;border-right:1px solid #fff;box-sizing:border-box"></div>
<div class="a" style="left:82px;top:381px;width:411px;height:85px;border-top:1px solid #BAB7A6;border-left:1px solid #BAB7A6;border-bottom:1px solid #EAE7D8;border-right:1px solid #EAE7D8;box-sizing:border-box"></div>
<div class="t" style="left:83px;top:382.57px;font-size:7.6px;color:#000;transform:scaleX(0.9706);transform-origin:0 0;">This error indicates that Interbase Server is not running on the machine. If you click on Start / Settings / Control Panel you</div>
<div class="t" style="left:83px;top:392.02px;font-size:7.6px;color:#000;transform:scaleX(0.9795);transform-origin:0 0;">should have an Interbase Manager icon. Click on this icon. If it says that Interbase Server is currently stopped then just click</div>
<div class="t" style="left:83px;top:401.47px;font-size:7.6px;color:#000;transform:scaleX(0.9778);transform-origin:0 0;">on the start button. Also ensure that Startup mode is set to automatic. If that does not work then uninstall Interbase and</div>
<div class="t" style="left:83px;top:410.92px;font-size:7.6px;color:#000;transform:scaleX(0.9818);transform-origin:0 0;">reinstall it. Follow the instructions carefully and make sure that you set the 'Modify Start Options' as per our instructions.</div>
<div class="a" style="left:68px;top:380px;width:13px;height:14px;background:#ECE9D8;border-top:1px solid #F4F2E8;border-left:1px solid #F4F2E8;border-bottom:1px solid #858272;border-right:1px solid #858272;box-sizing:border-box"></div>
<div class="a" style="left:69px;top:381px;width:11px;height:12px;border-bottom:1px solid #B8B5A4;border-right:1px solid #B8B5A4;box-sizing:border-box"></div>
<svg class="a" style="left:69px;top:381px" width="12" height="11" viewBox="0 0 12 11"><path d="M5.8 1.2C8.9 1.2 10.6 2.6 10.6 4.3C10.6 6 8.9 7.3 5.8 7.3L4.8 7.3L2.8 9.8L3.2 7C1.8 6.5 1.1 5.5 1.1 4.3C1.1 2.6 2.8 1.2 5.8 1.2Z" fill="#fff" stroke="#2A2A2A" stroke-width="1.3"/></svg>
<div class="a" style="left:81px;top:469px;width:156px;height:13px;background:#fff;border-top:1px solid #8E8B7A;border-left:1px solid #8E8B7A;border-bottom:1px solid #fff;border-right:1px solid #fff;box-sizing:border-box"></div>
<div class="a" style="left:82px;top:470px;width:154px;height:11px;border-top:1px solid #BAB7A6;border-left:1px solid #BAB7A6;border-bottom:1px solid #EAE7D8;border-right:1px solid #EAE7D8;box-sizing:border-box"></div>
<div class="a" style="left:225px;top:471px;width:11px;height:10px;background:#ECE9D8;border-right:1px solid #C9C6B6;border-bottom:1px solid #C9C6B6;box-sizing:border-box"></div>
<div class="a" style="left:225px;top:471px;width:10px;height:9px;border-right:1px solid #8A877A;border-bottom:1px solid #8A877A;box-sizing:border-box"></div>
<svg class="a" style="left:227.5px;top:474.0px" width="5" height="3" viewBox="0 0 5 3"><path d="M0 0h5l-2.5 3z" fill="#000"/></svg>
<div class="t" style="left:84px;top:470.80px;font-size:8.5px;color:#000;transform:scaleX(0.8588);transform-origin:0 0;">ADMINISTRATOR</div>
<div class="t" style="left:279px;top:470.80px;font-size:8.5px;color:#000;transform:scaleX(0.8471);transform-origin:0 0;">Date Modified:</div>
<div class="a" style="left:350px;top:469px;width:71px;height:13px;background:#ECE9D8;border-top:1px solid #8E8B7A;border-left:1px solid #8E8B7A;border-bottom:1px solid #fff;border-right:1px solid #fff;box-sizing:border-box"></div>
<div class="a" style="left:351px;top:470px;width:69px;height:11px;border-top:1px solid #BAB7A6;border-left:1px solid #BAB7A6;border-bottom:1px solid #EAE7D8;border-right:1px solid #EAE7D8;box-sizing:border-box"></div>
<div class="t" style="left:352px;top:470.80px;font-size:8.5px;color:#000;transform:scaleX(0.8588);transform-origin:0 0;">06/10/2005 16:07</div>
<div class="t" style="left:279px;top:134.80px;font-size:8.5px;color:#000;transform:scaleX(0.8353);transform-origin:0 0;">Call Number:</div>
<div class="a" style="left:350px;top:133px;width:44px;height:13px;background:#ECE9D8;border-top:1px solid #8E8B7A;border-left:1px solid #8E8B7A;border-bottom:1px solid #fff;border-right:1px solid #fff;box-sizing:border-box"></div>
<div class="a" style="left:351px;top:134px;width:42px;height:11px;border-top:1px solid #BAB7A6;border-left:1px solid #BAB7A6;border-bottom:1px solid #EAE7D8;border-right:1px solid #EAE7D8;box-sizing:border-box"></div>
<div class="t" style="left:-8.5px;width:400px;text-align:right;top:134.80px;font-size:8.5px;color:#000;transform:scaleX(0.8588);transform-origin:400px 0;">3</div>
<div class="t" style="left:279px;top:147.80px;font-size:8.5px;color:#000;transform:scaleX(0.8353);transform-origin:0 0;">Call Duration:</div>
<div class="a" style="left:350px;top:147px;width:44px;height:14px;background:#fff;border-top:1px solid #8E8B7A;border-left:1px solid #8E8B7A;border-bottom:1px solid #fff;border-right:1px solid #fff;box-sizing:border-box"></div>
<div class="a" style="left:351px;top:148px;width:42px;height:12px;border-top:1px solid #BAB7A6;border-left:1px solid #BAB7A6;border-bottom:1px solid #EAE7D8;border-right:1px solid #EAE7D8;box-sizing:border-box"></div>
<div class="a" style="left:381px;top:148px;width:11px;height:6px;background:#ECE9D8;border-right:1px solid #8A877A;border-bottom:1px solid #8A877A;box-sizing:border-box"></div>
<div class="a" style="left:381px;top:154px;width:11px;height:5px;background:#ECE9D8;border-right:1px solid #8A877A;border-bottom:1px solid #8A877A;box-sizing:border-box"></div>
<svg class="a" style="left:384px;top:150px" width="5" height="3" viewBox="0 0 5 3"><path d="M0 3h5l-2.5-2.5z" fill="#000"/></svg>
<svg class="a" style="left:384px;top:155.5px" width="5" height="3" viewBox="0 0 5 3"><path d="M0 0h5l-2.5 2.5z" fill="#000"/></svg>
<div class="t" style="left:279px;top:162.80px;font-size:8.5px;color:#000;transform:scaleX(0.8353);transform-origin:0 0;">Out Of Hours:</div>
<div class="a" style="left:350px;top:163px;width:9px;height:9px;background:#fff;border-top:1px solid #B5B1A0;border-left:1px solid #B5B1A0;border-bottom:1px solid #fff;border-right:1px solid #fff;box-sizing:border-box"></div>
<div class="a" style="left:351px;top:164px;width:7px;height:7px;border-top:1px solid #86836F;border-left:1px solid #86836F;box-sizing:border-box"></div>
<div class="t" style="left:279px;top:176.80px;font-size:8.5px;color:#000;transform:scaleX(0.8353);transform-origin:0 0;">Due Date:</div>
<div class="a" style="left:350px;top:177px;width:9px;height:9px;background:#fff;border-top:1px solid #B5B1A0;border-left:1px solid #B5B1A0;border-bottom:1px solid #fff;border-right:1px solid #fff;box-sizing:border-box"></div>
<div class="a" style="left:351px;top:178px;width:7px;height:7px;border-top:1px solid #86836F;border-left:1px solid #86836F;box-sizing:border-box"></div>
<div class="a" style="left:365px;top:176px;width:60px;height:13px;background:#ECE9D8;border-top:1px solid #8E8B7A;border-left:1px solid #8E8B7A;border-bottom:1px solid #fff;border-right:1px solid #fff;box-sizing:border-box"></div>
<div class="a" style="left:366px;top:177px;width:58px;height:11px;border-top:1px solid #BAB7A6;border-left:1px solid #BAB7A6;border-bottom:1px solid #EAE7D8;border-right:1px solid #EAE7D8;box-sizing:border-box"></div>
<div class="a" style="left:427px;top:176px;width:32px;height:13px;background:#ECE9D8;border-top:1px solid #8E8B7A;border-left:1px solid #8E8B7A;border-bottom:1px solid #fff;border-right:1px solid #fff;box-sizing:border-box"></div>
<div class="a" style="left:428px;top:177px;width:30px;height:11px;border-top:1px solid #BAB7A6;border-left:1px solid #BAB7A6;border-bottom:1px solid #EAE7D8;border-right:1px solid #EAE7D8;box-sizing:border-box"></div>
<div class="a" style="left:446px;top:177px;width:11px;height:6px;background:#ECE9D8;border-right:1px solid #8A877A;border-bottom:1px solid #8A877A;box-sizing:border-box"></div>
<div class="a" style="left:446px;top:183px;width:11px;height:4px;background:#ECE9D8;border-right:1px solid #8A877A;border-bottom:1px solid #8A877A;box-sizing:border-box"></div>
<svg class="a" style="left:449px;top:179px" width="5" height="3" viewBox="0 0 5 3"><path d="M0 3h5l-2.5-2.5z" fill="#000"/></svg>
<svg class="a" style="left:449px;top:184.5px" width="5" height="3" viewBox="0 0 5 3"><path d="M0 0h5l-2.5 2.5z" fill="#000"/></svg>
<div class="t" style="left:279px;top:191.80px;font-size:8.5px;color:#000;transform:scaleX(0.8353);transform-origin:0 0;">Call Closed:</div>
<div class="a" style="left:350px;top:192px;width:9px;height:9px;background:#fff;border-top:1px solid #B5B1A0;border-left:1px solid #B5B1A0;border-bottom:1px solid #fff;border-right:1px solid #fff;box-sizing:border-box"></div>
<div class="a" style="left:351px;top:193px;width:7px;height:7px;border-top:1px solid #86836F;border-left:1px solid #86836F;box-sizing:border-box"></div>
<div class="a" style="left:365px;top:190px;width:60px;height:13px;background:#ECE9D8;border-top:1px solid #8E8B7A;border-left:1px solid #8E8B7A;border-bottom:1px solid #fff;border-right:1px solid #fff;box-sizing:border-box"></div>
<div class="a" style="left:366px;top:191px;width:58px;height:11px;border-top:1px solid #BAB7A6;border-left:1px solid #BAB7A6;border-bottom:1px solid #EAE7D8;border-right:1px solid #EAE7D8;box-sizing:border-box"></div>
<div class="a" style="left:427px;top:190px;width:32px;height:13px;background:#ECE9D8;border-top:1px solid #8E8B7A;border-left:1px solid #8E8B7A;border-bottom:1px solid #fff;border-right:1px solid #fff;box-sizing:border-box"></div>
<div class="a" style="left:428px;top:191px;width:30px;height:11px;border-top:1px solid #BAB7A6;border-left:1px solid #BAB7A6;border-bottom:1px solid #EAE7D8;border-right:1px solid #EAE7D8;box-sizing:border-box"></div>
<div class="a" style="left:446px;top:191px;width:11px;height:6px;background:#ECE9D8;border-right:1px solid #8A877A;border-bottom:1px solid #8A877A;box-sizing:border-box"></div>
<div class="a" style="left:446px;top:197px;width:11px;height:4px;background:#ECE9D8;border-right:1px solid #8A877A;border-bottom:1px solid #8A877A;box-sizing:border-box"></div>
<svg class="a" style="left:449px;top:193px" width="5" height="3" viewBox="0 0 5 3"><path d="M0 3h5l-2.5-2.5z" fill="#000"/></svg>
<svg class="a" style="left:449px;top:198.5px" width="5" height="3" viewBox="0 0 5 3"><path d="M0 0h5l-2.5 2.5z" fill="#000"/></svg>
<div class="t" style="left:279px;top:205.80px;font-size:8.5px;color:#000;transform:scaleX(0.8353);transform-origin:0 0;">Total Duration:</div>
<div class="a" style="left:350px;top:204px;width:43px;height:13px;background:#fff;border-top:1px solid #8E8B7A;border-left:1px solid #8E8B7A;border-bottom:1px solid #fff;border-right:1px solid #fff;box-sizing:border-box"></div>
<div class="a" style="left:351px;top:205px;width:41px;height:11px;border-top:1px solid #BAB7A6;border-left:1px solid #BAB7A6;border-bottom:1px solid #EAE7D8;border-right:1px solid #EAE7D8;box-sizing:border-box"></div>
<div class="a" style="left:380px;top:205px;width:11px;height:6px;background:#ECE9D8;border-right:1px solid #8A877A;border-bottom:1px solid #8A877A;box-sizing:border-box"></div>
<div class="a" style="left:380px;top:211px;width:11px;height:4px;background:#ECE9D8;border-right:1px solid #8A877A;border-bottom:1px solid #8A877A;box-sizing:border-box"></div>
<svg class="a" style="left:383px;top:207px" width="5" height="3" viewBox="0 0 5 3"><path d="M0 3h5l-2.5-2.5z" fill="#000"/></svg>
<svg class="a" style="left:383px;top:212.5px" width="5" height="3" viewBox="0 0 5 3"><path d="M0 0h5l-2.5 2.5z" fill="#000"/></svg>
<div class="a" style="left:502px;top:116px;width:194px;height:371px;background:#7090E8;border-radius:6px 6px 0 0"></div>
<div class="a" style="left:502px;top:116px;width:194px;height:20px;border-radius:6px 6px 0 0;border:1px solid #6A88DE;border-bottom:none;box-sizing:border-box;background:linear-gradient(to bottom,#94AEF2 0,#94AEF2 1px,#7E9AEA 2px,#7291E6 9px,#7696E8 16px,#7B9CEA 19px)"></div>
<div class="t" style="left:507px;top:122.27px;font-size:9.6px;color:#E4ECFB;transform:scaleX(0.9271);transform-origin:0 0;">Open Calls</div>
<div class="a" style="left:505px;top:136px;width:189px;height:350px;background:#fff;border-left:1px solid #7F7D70;border-top:1px solid #7F7D70;box-sizing:border-box"></div>
<div class="a" style="left:506px;top:137px;width:188px;height:11px;background:#ECE9D8"></div>
<div class="a" style="left:506px;top:147px;width:188px;height:1px;background:#D0CDBE"></div>
<div class="a" style="left:545px;top:138px;width:1px;height:9px;background:#C7C3B1"></div>
<div class="a" style="left:585px;top:138px;width:1px;height:9px;background:#C7C3B1"></div>
<div class="t" style="left:508px;top:138.80px;font-size:8.5px;color:#000;transform:scaleX(0.7882);transform-origin:0 0;">Number</div>
<div class="t" style="left:546.5px;top:138.80px;font-size:8.5px;color:#000;transform:scaleX(0.8118);transform-origin:0 0;">Date</div>
<svg class="a" style="left:579px;top:142px" width="5" height="3" viewBox="0 0 5 3"><path d="M0 0h5l-2.5 3z" fill="#000"/></svg>
<div class="t" style="left:587px;top:138.80px;font-size:8.5px;color:#000;transform:scaleX(0.8118);transform-origin:0 0;">Customer</div>
<div class="a" style="left:506px;top:149px;width:186px;height:11px;background:#316AC5"></div>
<div class="a" style="left:545px;top:149px;width:1px;height:11px;background:#8CA8DC"></div>
<div class="a" style="left:585px;top:149px;width:1px;height:11px;background:#8CA8DC"></div>
<div class="t" style="left:508px;top:149.80px;font-size:8.5px;color:#fff;transform:scaleX(0.8588);transform-origin:0 0;">3</div>
<div class="t" style="left:546.5px;top:149.80px;font-size:8.5px;color:#fff;transform:scaleX(0.8588);transform-origin:0 0;">24/09/2001</div>
<div class="t" style="left:587px;top:149.80px;font-size:8.5px;color:#fff;transform:scaleX(0.8835);transform-origin:0 0;">First Software International</div>
<div class="a" style="left:506px;top:474px;width:188px;height:11px;background:#F6F5EF"></div>
<div class="a" style="left:507px;top:474px;width:9px;height:10px;background:#C3D4F9;border-radius:1px"></div>
<svg class="a" style="left:509px;top:476px" width="5" height="7" viewBox="0 0 5 7"><path d="M4 0.5L1 3.5L4 6.5" stroke="#2A3A70" stroke-width="1.7" fill="none"/></svg>
<div class="a" style="left:518px;top:474px;width:46px;height:10px;background:#BFD0F8;border-radius:1px"></div>
<div class="a" style="left:537px;top:477px;width:9px;height:4px;background:repeating-linear-gradient(to right,#90A8E4 0 1px,transparent 1px 2px)"></div>
<div class="a" style="left:682px;top:474px;width:10px;height:10px;background:#C3D4F9;border-radius:1px"></div>
<svg class="a" style="left:685px;top:476px" width="5" height="7" viewBox="0 0 5 7"><path d="M1 0.5L4 3.5L1 6.5" stroke="#2A3A70" stroke-width="1.7" fill="none"/></svg>
<div class="a" style="left:505px;top:485px;width:189px;height:1px;background:#fff"></div>
<div class="a" style="left:0px;top:491px;width:700px;height:13px;background:#ECE9D8"></div>
<div class="a" style="left:0px;top:492px;width:700px;height:1px;background:#fff"></div>
<div class="a" style="left:0px;top:493px;width:700px;height:1px;background:#D6D2C0"></div>
<div class="t" style="left:2.6px;top:494.38px;font-size:9.0px;color:#000;transform:scaleX(0.8111);transform-origin:0 0;">Ready</div>
<div class="a" style="left:0px;top:504px;width:700px;height:3px;background:#245EDC"></div>
<div class="a" style="left:0px;top:504px;width:64px;height:3px;background:#3C9A3C"></div>
<div class="a" style="left:612px;top:504px;width:88px;height:3px;background:#0F8FEF"></div>
</body></html>
